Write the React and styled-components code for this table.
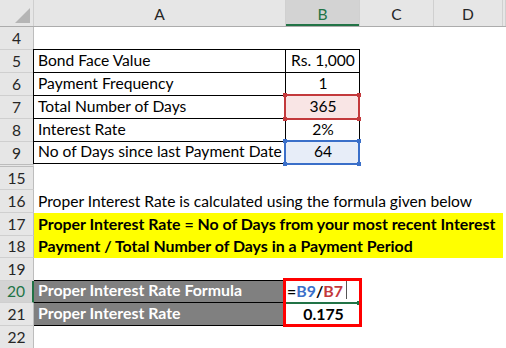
import React from 'react';
import styled, { createGlobalStyle, css } from 'styled-components';

const Global = createGlobalStyle`
  html, body { margin: 0; padding: 0; background: #fff; overflow: hidden; }
  body { font-family: Lato, "Liberation Sans", sans-serif; }
`;

const COLS = '34px 252px 74px 74px 69px 1fr';
const GREEN = '#217346';
const REF_RED = '#c3393c';
const REF_BLUE = '#3a6fc9';

const Sheet = styled.div`
  width: 506px;
  height: 348px;
  overflow: hidden;
  display: flex;
  flex-direction: column;
  background: #fff;
  font-size: 15.6px;
  color: #000;
`;

const Row = styled.div`
  display: grid;
  grid-template-columns: ${COLS};
  height: ${(p) => p.$h}px;
  flex: none;
`;

const HeaderRow = styled(Row)`
  background: #e6e6e6;
  border-bottom: 1px solid #acacac;
  box-sizing: border-box;
`;

const Corner = styled.div`
  border-right: 1px solid #cfcfcf;
  svg { display: block; }
`;

const ColHead = styled.div`
  display: flex;
  align-items: center;
  justify-content: center;
  padding-top: 2px;
  box-sizing: border-box;
  border-right: 1px solid #d0d0d0;
  color: ${(p) => (p.$active ? GREEN : '#262626')};
  background: ${(p) => (p.$active ? '#d3d3d3' : 'transparent')};
  ${(p) => p.$active && css`box-shadow: inset 0 -2px 0 ${GREEN};`}
`;

const RowHead = styled.div`
  display: flex;
  align-items: flex-end;
  justify-content: center;
  padding-bottom: 2px;
  box-sizing: border-box;
  background: ${(p) => (p.$active ? '#d3d3d3' : '#e6e6e6')};
  color: ${(p) => (p.$active ? GREEN : '#262626')};
  border-right: ${(p) => (p.$active ? `2px solid ${GREEN}` : '1px solid #bdbdbd')};
  border-bottom: ${(p) => (p.$noBottom ? 'none' : '1px solid #cfcfcf')};
  border-top: ${(p) => (p.$hiddenAbove ? '3px double #bcbcbc' : 'none')};
  line-height: 18px;
`;

const shadow = (p) => {
  const s = [];
  if (p.$top) s.push('0 -1px 0 #000');
  if (p.$left) s.push('-1px 0 0 #000');
  if (p.$top && p.$left) s.push('-1px -1px 0 #000');
  return s.length ? s.join(', ') : 'none';
};

const Cell = styled.div`
  display: flex;
  align-items: flex-end;
  justify-content: ${(p) => (p.$center ? 'center' : 'flex-start')};
  padding: 0 ${(p) => (p.$tight ? '0 0 3px 1px' : '3px 3px 4px')};
  padding: ${(p) => (p.$tight ? '0 0 3px 1px' : '0 3px 3px 4px')};
  box-sizing: border-box;
  line-height: 18px;
  white-space: nowrap;
  min-width: 0;
  color: ${(p) => p.$color || '#000'};
  font-weight: ${(p) => (p.$bold ? 700 : 400)};
  font-size: ${(p) => (p.$bold ? '15.9px' : 'inherit')};
  background: ${(p) => p.$fill || 'transparent'};
  ${(p) => p.$span && css`grid-column: span ${p.$span};`}
  ${(p) =>
    p.$box &&
    css`
      border-right: 1px solid #000;
      border-bottom: 1px solid #000;
    `}
  box-shadow: ${shadow};
  ${(p) => p.$rel && css`position: relative;`}
`;

const RefBox = styled.div`
  position: absolute;
  top: -2px;
  left: -2px;
  right: -1px;
  bottom: -2px;
  border: 2px solid ${(p) => p.$color};
  box-sizing: border-box;
  pointer-events: none;
`;

const Handle = styled.span`
  position: absolute;
  width: 4px;
  height: 4px;
  background: ${(p) => p.$color};
  ${(p) => (p.$v === 't' ? 'top: -3px;' : 'bottom: -3px;')}
  ${(p) => (p.$h === 'l' ? 'left: -3px;' : 'right: -3px;')}
`;

const HighlightBox = styled.div`
  position: absolute;
  left: -3px;
  top: -3px;
  width: 79px;
  height: 49px;
  border: 3px solid #ff0000;
  box-sizing: border-box;
  pointer-events: none;
  z-index: 2;
`;

const EditLine = styled.div`
  position: absolute;
  left: 0;
  right: 1px;
  bottom: -1px;
  height: 2px;
  background: ${GREEN};
  &::after {
    content: '';
    position: absolute;
    right: -2px;
    top: -1px;
    width: 4px;
    height: 4px;
    background: ${GREEN};
  }
`;

const Caret = styled.span`
  display: inline-block;
  align-self: stretch;
  width: 1px;
  margin: 0 0 1px 3px;
  background: #555;
`;

const Ref = styled.span`
  color: ${(p) => p.$color};
`;

function RefHighlight({ color }) {
  return (
    <RefBox $color={color}>
      <Handle $color={color} $v="t" $h="l" />
      <Handle $color={color} $v="t" $h="r" />
      <Handle $color={color} $v="b" $h="l" />
      <Handle $color={color} $v="b" $h="r" />
    </RefBox>
  );
}

const tableRows = [
  { n: 5, label: 'Bond Face Value', value: 'Rs. 1,000' },
  { n: 6, label: 'Payment Frequency', value: '1' },
  { n: 7, label: 'Total Number of Days', value: '365', ref: 'red' },
  { n: 8, label: 'Interest Rate', value: '2%' },
  { n: 9, label: 'No of Days since last Payment Date', value: '64', ref: 'blue' },
];

export default function App() {
  return (
    <>
      <Global />
      <Sheet>
        <HeaderRow $h={27}>
          <Corner>
            <svg width="33" height="26" viewBox="0 0 33 26">
              <polygon points="30,8 30,23 15,23" fill="#b5b5b5" />
            </svg>
          </Corner>
          <ColHead>A</ColHead>
          <ColHead $active>B</ColHead>
          <ColHead>C</ColHead>
          <ColHead>D</ColHead>
          <ColHead />
        </HeaderRow>

        <Row $h={23}>
          <RowHead>4</RowHead>
          <Cell $span={5} />
        </Row>

        {tableRows.map((r) => {
          const fill = r.ref === 'red' ? '#f9e5e5' : r.ref === 'blue' ? '#e7edf8' : undefined;
          const color = r.ref === 'red' ? REF_RED : REF_BLUE;
          return (
            <Row key={r.n} $h={r.n === 9 ? 22 : 23}>
              <RowHead $noBottom={r.n === 9}>{r.n}</RowHead>
              <Cell $box $left $top={r.n === 5}>
                {r.label}
              </Cell>
              <Cell $box $center $top={r.n === 5} $fill={fill} $rel={!!r.ref}>
                {r.value}
                {r.ref && <RefHighlight color={color} />}
              </Cell>
              <Cell $span={3} />
            </Row>
          );
        })}

        <Row $h={26}>
          <RowHead $hiddenAbove>15</RowHead>
          <Cell $span={5} />
        </Row>

        <Row $h={23}>
          <RowHead>16</RowHead>
          <Cell $span={5}>Proper Interest Rate is calculated using the formula given below</Cell>
        </Row>

        <Row $h={23}>
          <RowHead>17</RowHead>
          <Cell $span={4} $bold $fill="#ffff00">
            Proper Interest Rate = No of Days from your most recent Interest
          </Cell>
          <Cell />
        </Row>

        <Row $h={22}>
          <RowHead>18</RowHead>
          <Cell $span={4} $bold $fill="#ffff00">
            Payment / Total Number of Days in a Payment Period
          </Cell>
          <Cell />
        </Row>

        <Row $h={23}>
          <RowHead>19</RowHead>
          <Cell $span={5} />
        </Row>

        <Row $h={22}>
          <RowHead $active>20</RowHead>
          <Cell $box $top $bold $fill="#808080" $color="#fff">
            Proper Interest Rate Formula
          </Cell>
          <Cell $rel $tight $bold>
            =<Ref $color={REF_BLUE}>B9</Ref>/<Ref $color={REF_RED}>B7</Ref>
            <Caret />
            <EditLine />
            <HighlightBox />
          </Cell>
          <Cell $span={3} />
        </Row>

        <Row $h={23}>
          <RowHead>21</RowHead>
          <Cell $box $bold $fill="#808080" $color="#fff">
            Proper Interest Rate
          </Cell>
          <Cell $center $bold>
            0.175
          </Cell>
          <Cell $span={3} />
        </Row>

        <Row $h={23}>
          <RowHead>22</RowHead>
          <Cell $span={5} />
        </Row>
      </Sheet>
    </>
  );
}
